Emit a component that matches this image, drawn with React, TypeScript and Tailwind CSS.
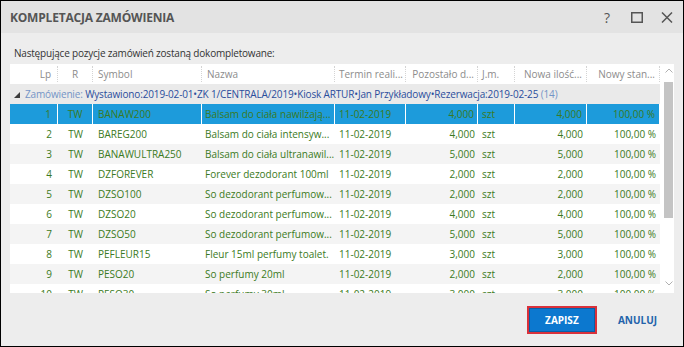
type Row = {
  lp: number;
  symbol: string;
  name: string;
  left: string;
  qty: string;
};

const rows: Row[] = [
  { lp: 1, symbol: 'BANAW200', name: 'Balsam do ciała nawilżają...', left: '4,000', qty: '4,000' },
  { lp: 2, symbol: 'BAREG200', name: 'Balsam do ciała intensyw...', left: '4,000', qty: '4,000' },
  { lp: 3, symbol: 'BANAWULTRA250', name: 'Balsam do ciała ultranawil...', left: '5,000', qty: '5,000' },
  { lp: 4, symbol: 'DZFOREVER', name: 'Forever dezodorant 100ml', left: '2,000', qty: '2,000' },
  { lp: 5, symbol: 'DZSO100', name: 'So dezodorant perfumow...', left: '2,000', qty: '2,000' },
  { lp: 6, symbol: 'DZSO20', name: 'So dezodorant perfumow...', left: '4,000', qty: '4,000' },
  { lp: 7, symbol: 'DZSO50', name: 'So dezodorant perfumow...', left: '5,000', qty: '5,000' },
  { lp: 8, symbol: 'PEFLEUR15', name: 'Fleur 15ml perfumy toalet.', left: '3,000', qty: '3,000' },
  { lp: 9, symbol: 'PESO20', name: 'So perfumy 20ml', left: '2,000', qty: '2,000' },
  { lp: 10, symbol: 'PESO30', name: 'So perfumy 30ml', left: '3,000', qty: '3,000' },
];

const App = () => {
  return (
    <div className="box-border flex h-[347px] w-[684px] flex-col border border-black bg-[#ededed] font-['Open_Sans',sans-serif] text-[10px] leading-[12px]">
      {/* title bar */}
      <div className="flex h-[32px] shrink-0 items-center justify-between bg-[#e3e3e3] pl-[9px] pr-[6px] pt-[1px]">
        <span className="text-[12px] font-bold tracking-[-0.2px] text-[#555]">KOMPLETACJA ZAMÓWIENIA</span>
        <div className="flex items-center gap-[10px] text-[#555]">
          <span className="flex w-[20px] justify-center text-[14px] leading-[14px]">?</span>
          <span className="flex w-[20px] justify-center">
            <svg width="12" height="11" viewBox="0 0 12 11">
              <rect x="0.75" y="0.75" width="10.5" height="9.5" fill="none" stroke="#555" strokeWidth="1.5" />
            </svg>
          </span>
          <span className="flex w-[20px] justify-center">
            <svg width="12" height="11" viewBox="0 0 12 11">
              <path d="M1 0.5 L11 10.5 M11 0.5 L1 10.5" stroke="#555" strokeWidth="1.5" fill="none" />
            </svg>
          </span>
        </div>
      </div>

      {/* caption */}
      <div className="h-[31px] shrink-0 pl-[13px] pt-[14px] tracking-[-0.2px] text-[#333]">
        Następujące pozycje zamówień zostaną dokompletowane:
      </div>

      {/* grid */}
      <div className="ml-[9px] flex h-[229px] w-[664px] shrink-0 overflow-hidden bg-white">
        <div className="flex w-[650px] flex-col">
          <div className="flex h-[20px] shrink-0 items-center text-[#8c8c8c]">
            <div className="flex h-[16px] w-[48px] items-center justify-end border-r border-dotted border-[#d4d4d4] pr-[6px]">Lp</div>
            <div className="flex h-[16px] w-[35px] items-center justify-center border-r border-dotted border-[#d4d4d4]">R</div>
            <div className="flex h-[16px] w-[109px] items-center border-r border-dotted border-[#d4d4d4] pl-[5px]">Symbol</div>
            <div className="flex h-[16px] w-[133px] items-center border-r border-dotted border-[#d4d4d4] pl-[5px]">Nazwa</div>
            <div className="flex h-[16px] w-[71px] items-center whitespace-nowrap border-r border-dotted border-[#d4d4d4] pl-[4px]">Termin reali...</div>
            <div className="flex h-[16px] w-[72px] items-center justify-end whitespace-nowrap border-r border-dotted border-[#d4d4d4] pr-[3px]">Pozostało d...</div>
            <div className="flex h-[16px] w-[37px] items-center border-r border-dotted border-[#d4d4d4] pl-[4px]">J.m.</div>
            <div className="flex h-[16px] w-[72px] items-center justify-end whitespace-nowrap border-r border-dotted border-[#d4d4d4] pr-[4px]">Nowa ilość...</div>
            <div className="flex h-[16px] w-[73px] items-center justify-end whitespace-nowrap border-r border-dotted border-[#d4d4d4] pr-[4px]">Nowy stan...</div>
          </div>

          <div className="flex h-[20px] shrink-0 items-center whitespace-nowrap bg-[#eaeaea] pl-[4px] tracking-[-0.15px]">
            <svg width="6" height="6" viewBox="0 0 6 6" className="mr-[5px] mt-[1px]">
              <path d="M6 0 L6 6 L0 6 Z" fill="#3c3c3c" />
            </svg>
            <span className="text-[#7394c6]">Zamówienie:&nbsp;</span>
            <span className="text-[#2a4d9c]">
              Wystawiono:2019-02-01•ZK 1/CENTRALA/2019•Kiosk ARTUR•Jan Przykładowy•Rezerwacja:2019-02-25
            </span>
            <span className="text-[#7394c6]">&nbsp;(14)</span>
          </div>

          {rows.map((r) => {
            const selected = r.lp === 1;
            const bg = selected ? 'bg-[#1d9bdb]' : r.lp % 2 === 1 ? 'bg-[#f4f4f4]' : 'bg-white';
            const sep = selected ? 'border-r border-white' : '';
            return (
              <div key={r.lp} className={`flex h-[20px] shrink-0 items-stretch whitespace-nowrap text-[#3b7a22] ${bg}`}>
                <div className={`flex w-[48px] items-center justify-end pr-[6px] ${sep}`}>{r.lp}</div>
                <div className={`flex w-[35px] items-center justify-center ${sep}`}>TW</div>
                <div className={`flex w-[109px] items-center pl-[5px] ${sep}`}>{r.symbol}</div>
                <div className={`flex w-[133px] items-center overflow-hidden pl-[3px] ${sep}`}>{r.name}</div>
                <div className={`flex w-[71px] items-center pl-[4px] ${sep}`}>11-02-2019</div>
                <div className={`flex w-[72px] items-center justify-end pr-[3px] ${sep}`}>{r.left}</div>
                <div className={`flex w-[37px] items-center pl-[4px] ${sep}`}>szt</div>
                <div className={`flex w-[72px] items-center justify-end pr-[4px] ${sep}`}>{r.qty}</div>
                <div className={`flex w-[73px] items-center justify-end pr-[4px] ${sep}`}>100,00 %</div>
              </div>
            );
          })}
        </div>

        {/* scrollbar */}
        <div className="flex w-[14px] flex-col items-end pr-[1px]">
          <div className="flex h-[12px] w-[9px] items-center justify-center">
            <svg width="8" height="5" viewBox="0 0 8 5">
              <path d="M0.5 4.5 L4 1 L7.5 4.5" stroke="#b0b0b0" strokeWidth="1" fill="none" />
            </svg>
          </div>
          <div className="mt-[6px] h-[136px] w-[9px] bg-[#c4c4c4]" />
          <div className="mt-[61px] flex h-[8px] w-[9px] items-center justify-center">
            <svg width="8" height="5" viewBox="0 0 8 5">
              <path d="M0.5 0.5 L4 4 L7.5 0.5" stroke="#b0b0b0" strokeWidth="1" fill="none" />
            </svg>
          </div>
        </div>
      </div>

      {/* footer */}
      <div className="flex flex-1 items-center justify-end pr-[26px]">
        <button
          type="button"
          className="box-border flex h-[28px] w-[70px] items-center justify-center border-2 border-[#d9313b] bg-[#0c78cf] text-[10px] font-bold text-white shadow-[inset_0_0_0_1px_#0a5ea6]"
        >
          ZAPISZ
        </button>
        <span className="ml-[21px] text-[10px] font-bold text-[#2363ab]">ANULUJ</span>
      </div>
    </div>
  );
};

export default App;
